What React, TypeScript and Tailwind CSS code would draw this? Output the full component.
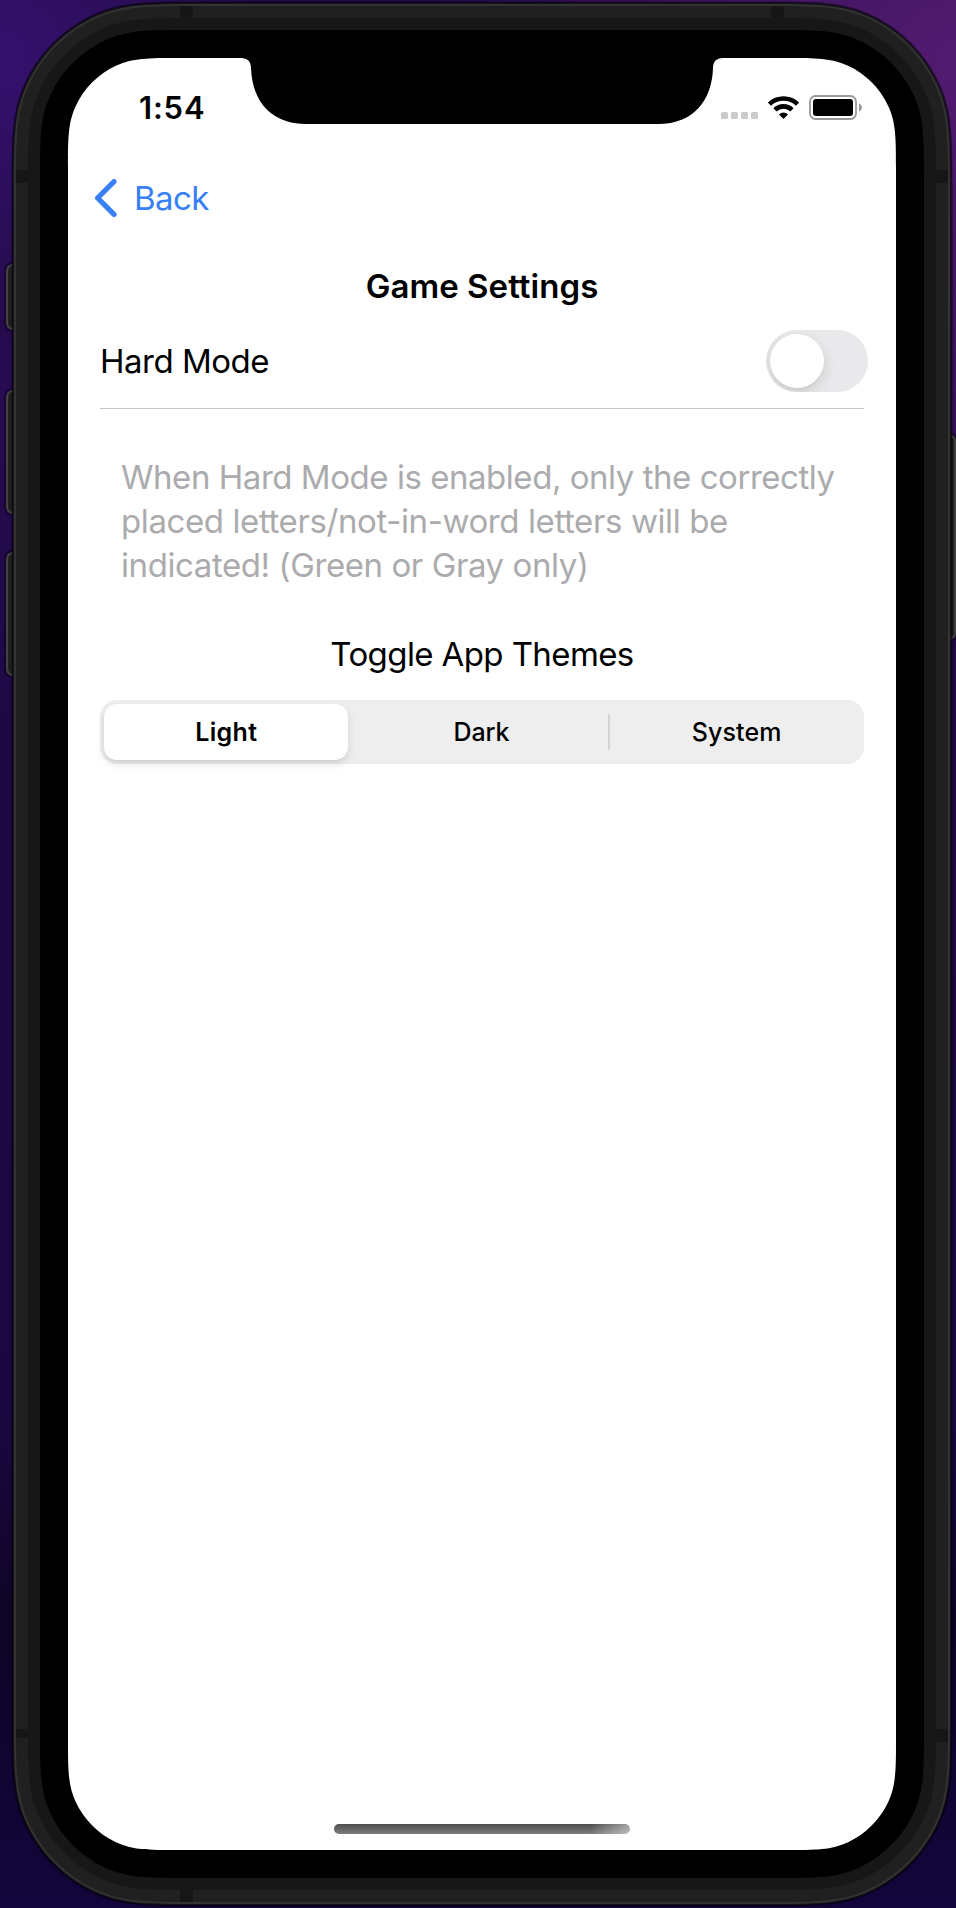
import { useState } from "react";

/** Rounded rectangle whose corners ease into the straight edges. */
function roundedShell(x0: number, y0: number, x1: number, y1: number, r: number) {
  const a = 1.32 * r;
  const b = 0.97 * r;
  const c = 0.778 * r;
  const d = 0.5774 * r;
  const e = 0.0937 * r;
  const f = 0.3643 * r;
  const g = 0.1931 * r;
  return [
    `M${x0 + a} ${y0}H${x1 - a}`,
    `C${x1 - b} ${y0} ${x1 - c} ${y0} ${x1 - d} ${y0 + e}`,
    `C${x1 - f} ${y0 + g} ${x1 - g} ${y0 + f} ${x1 - e} ${y0 + d}`,
    `C${x1} ${y0 + c} ${x1} ${y0 + b} ${x1} ${y0 + a}V${y1 - a}`,
    `C${x1} ${y1 - b} ${x1} ${y1 - c} ${x1 - e} ${y1 - d}`,
    `C${x1 - g} ${y1 - f} ${x1 - f} ${y1 - g} ${x1 - d} ${y1 - e}`,
    `C${x1 - c} ${y1} ${x1 - b} ${y1} ${x1 - a} ${y1}H${x0 + a}`,
    `C${x0 + b} ${y1} ${x0 + c} ${y1} ${x0 + d} ${y1 - e}`,
    `C${x0 + f} ${y1 - g} ${x0 + g} ${y1 - f} ${x0 + e} ${y1 - d}`,
    `C${x0} ${y1 - c} ${x0} ${y1 - b} ${x0} ${y1 - a}V${y0 + a}`,
    `C${x0} ${y0 + b} ${x0} ${y0 + c} ${x0 + e} ${y0 + d}`,
    `C${x0 + g} ${y0 + f} ${x0 + f} ${y0 + g} ${x0 + d} ${y0 + e}`,
    `C${x0 + c} ${y0} ${x0 + b} ${y0} ${x0 + a} ${y0}Z`,
  ].join("");
}

const sideButtons = [
  { x: 6, y: 264, h: 66 },
  { x: 6, y: 390, h: 124 },
  { x: 6, y: 552, h: 124 },
  { x: 940, y: 434, h: 206 },
];

const antennaBands = [
  { x: 180, y: 6, w: 13, h: 12 },
  { x: 771, y: 6, w: 13, h: 12 },
  { x: 180, y: 1890, w: 13, h: 12 },
  { x: 16, y: 170, w: 12, h: 13 },
  { x: 936, y: 170, w: 12, h: 13 },
  { x: 16, y: 1729, w: 12, h: 9 },
  { x: 936, y: 1729, w: 12, h: 13 },
];

function DeviceBezel() {
  return (
    <svg className="absolute inset-0" width="956" height="1908" viewBox="0 0 956 1908" fill="none" aria-hidden="true">
      {sideButtons.map((b) => (
        <g key={b.y}>
          <rect x={b.x - 2} y={b.y - 2} width="20" height={b.h + 4} rx="8" fill="#000" fillOpacity="0.35" />
          <rect x={b.x + 1} y={b.y + 1} width="14" height={b.h - 2} rx="6" fill="#202020" stroke="#424242" strokeWidth="2" />
        </g>
      ))}
      <path d={roundedShell(11.5, 1.5, 952.5, 1906.5, 141)} fill="#000" fillOpacity="0.55" />
      <path d={roundedShell(13, 3, 951, 1905, 140)} fill="#141216" />
      <path d={roundedShell(14, 4, 950, 1904, 139)} fill="#333333" />
      <path d={roundedShell(16, 6, 948, 1902, 137)} fill="#202020" />
      {antennaBands.map((b) => (
        <rect key={`${b.x}-${b.y}`} x={b.x} y={b.y} width={b.w} height={b.h} fill="#161616" />
      ))}
      <path d={roundedShell(28, 18, 936, 1890, 125)} fill="#171717" />
      <path d={roundedShell(40, 30, 924, 1878, 112)} fill="#000" />
      <path d={roundedShell(68, 58, 896, 1850, 83)} fill="#fff" />
      <path
        d="M238 57V58H241C247.5 58 251 61.5 251 68C252 100 270 124 306 124H658C694 124 712 100 713 68C713 61.5 716.5 58 723 58H726V57Z"
        fill="#000"
      />
    </svg>
  );
}

function StatusBar() {
  return (
    <div className="flex h-22 items-start justify-between pr-[33px] pl-[71px] pt-[30px]">
      <span className="text-[31px] leading-10 font-semibold tracking-[0.8px]">1:54</span>
      <svg className="mt-1" width="144" height="32" viewBox="719 92 144 32" aria-hidden="true">
        <g fill="#cbcbcb">
          <rect x="721" y="112" width="7" height="7" rx="1.5" />
          <rect x="731" y="112" width="7" height="7" rx="1.5" />
          <rect x="741" y="112" width="7" height="7" rx="1.5" />
          <rect x="751" y="112" width="7" height="7" rx="1.5" />
        </g>
        <g fill="none" stroke="#000" strokeWidth="4.6">
          <path d="M769.4 104.2A20.3 20.3 0 0 1 797.6 104.2" />
          <path d="M775 109.8A12.3 12.3 0 0 1 792 109.8" />
        </g>
        <path d="M783.5 119L779 114.4A6.4 6.4 0 0 1 788 114.4Z" />
        <rect x="810" y="96" width="46" height="23" rx="5.5" fill="none" stroke="#999" strokeWidth="1.8" />
        <rect x="813" y="99" width="40" height="17" rx="3" />
        <path d="M859 103.5C862.8 105 862.8 110 859 111.5Z" fill="#999" />
      </svg>
    </div>
  );
}

const themes = ["Light", "Dark", "System"];
const labelStyles: Record<string, string> = {
  Light: "mr-0.5 tracking-[0.3px]",
  Dark: "mr-px tracking-[-0.1px]",
  System: "tracking-[0.1px]",
};

function ThemePicker() {
  const [theme, setTheme] = useState("Light");
  return (
    <div className="relative mt-6 grid h-16 grid-cols-3 rounded-[17px] bg-[#eeeeee]">
      {themes.map((name) => (
        <button
          key={name}
          onClick={() => setTheme(name)}
          className={`relative flex items-center justify-center text-[25px] leading-16 ${
            name === theme ? "font-semibold" : "font-medium"
          }`}
        >
          {name === theme && (
            <span className="absolute top-1 bottom-1 left-1 w-[244px] rounded-[13px] bg-white shadow-[0_4px_9px_rgba(0,0,0,0.12),0_1px_1px_rgba(0,0,0,0.04)]" />
          )}
          <span className={`relative ${labelStyles[name]}`}>{name}</span>
        </button>
      ))}
      <span className="absolute top-3.5 left-[508px] h-9 w-0.5 rounded-full bg-[#d4d4d5]" />
    </div>
  );
}

function HardModeSwitch() {
  const [on, setOn] = useState(false);
  return (
    <button
      role="switch"
      aria-checked={on}
      aria-label="Hard Mode"
      onClick={() => setOn(!on)}
      className={`-mr-1 flex h-[62px] w-[102px] overflow-hidden rounded-full p-1 ${
        on ? "justify-end bg-[#34c759]" : "justify-start bg-[#e9e9eb]"
      }`}
    >
      <span className="size-[54px] rounded-full bg-white shadow-[0_5px_14px_rgba(0,0,0,0.13),0_2px_2px_rgba(0,0,0,0.03)]" />
    </button>
  );
}

export default function App() {
  return (
    <div className="relative h-[1908px] w-[956px] overflow-hidden bg-[radial-gradient(circle_at_0px_60px,#35116f_0px,#35116f00_260px),radial-gradient(circle_at_956px_60px,#521b70_0px,#3a0f6000_520px),linear-gradient(to_bottom,#220b45_0px,#260b50_400px,#1d0842_800px,#1b0842_1400px,#0e0426_1620px,#13053c_1908px)] font-[Inter,sans-serif] text-black">
      <DeviceBezel />
      <main className="relative ml-[68px] flex h-full w-[828px] flex-col pt-[58px] pb-[74px]">
        <StatusBar />
        <button className="mt-[30px] ml-[25px] flex h-11 items-center gap-[17px] self-start text-[33px] leading-11 tracking-[-0.6px] text-[#3880f7]">
          <svg width="24" height="40" viewBox="0 0 24 40" fill="none" aria-hidden="true">
            <path d="M21 3.6L4.6 20L21 36.4" stroke="currentColor" strokeWidth="5.2" strokeLinecap="round" strokeLinejoin="round" />
          </svg>
          Back
        </button>
        <section className="flex grow flex-col px-8 pt-11">
          <h1 className="text-center text-[33px] leading-11 font-semibold tracking-[0.05px]">Game Settings</h1>
          <div className="mt-[22px] flex items-center justify-between border-b border-[#c6c6c8] pb-4">
            <span className="text-[33px] leading-11 tracking-[-0.5px]">Hard Mode</span>
            <HardModeSwitch />
          </div>
          <p className="mt-[46px] ml-[21px] text-[33px] leading-11 text-[#ababae]">
            <span className="block tracking-[-0.46px]">When Hard Mode is enabled, only the correctly</span>
            <span className="block tracking-[-0.4px]">placed letters/not-in-word letters will be</span>
            <span className="block tracking-[-0.41px]">indicated! (Green or Gray only)</span>
          </p>
          <h2 className="mt-[45px] text-center text-[33px] leading-11 tracking-[-0.6px]">Toggle App Themes</h2>
          <ThemePicker />
        </section>
        <div className="h-2.5 w-[296px] self-center rounded-full bg-[linear-gradient(110deg,#ffffff00_86%,#ffffff80_100%),linear-gradient(to_bottom,#4e4e4e,#7c7c7c)]" />
      </main>
    </div>
  );
}
